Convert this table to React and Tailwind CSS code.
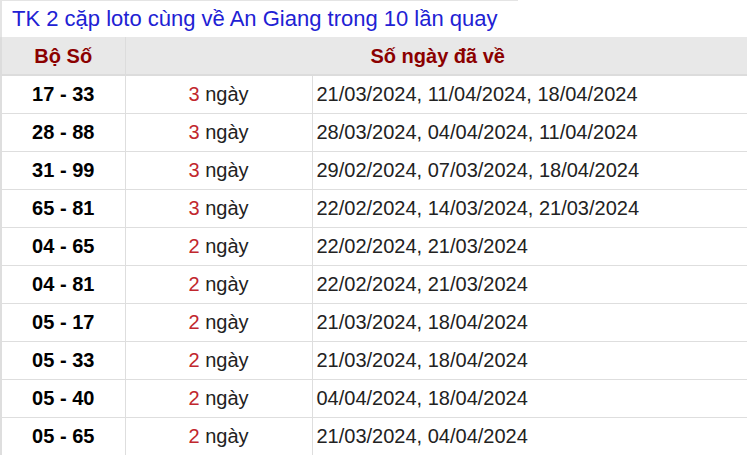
const ROWS = [
  ['17 - 33', 3, '21/03/2024, 11/04/2024, 18/04/2024'],
  ['28 - 88', 3, '28/03/2024, 04/04/2024, 11/04/2024'],
  ['31 - 99', 3, '29/02/2024, 07/03/2024, 18/04/2024'],
  ['65 - 81', 3, '22/02/2024, 14/03/2024, 21/03/2024'],
  ['04 - 65', 2, '22/02/2024, 21/03/2024'],
  ['04 - 81', 2, '22/02/2024, 21/03/2024'],
  ['05 - 17', 2, '21/03/2024, 18/04/2024'],
  ['05 - 33', 2, '21/03/2024, 18/04/2024'],
  ['05 - 40', 2, '04/04/2024, 18/04/2024'],
  ['05 - 65', 2, '21/03/2024, 04/04/2024'],
]

export default function App() {
  return (
    <div className="w-[747px] h-[455px] overflow-hidden bg-white font-['Liberation_Sans',Arial,sans-serif]">
      <div className="w-[518px] h-[37px] border-t border-l-2 border-[#e4e4e4] flex items-center pl-[10px] pb-[1px]">
        <h2 className="text-[22px] text-[#2121d4] leading-none">TK 2 cặp loto cùng về An Giang trong 10 lần quay</h2>
      </div>
      <table className="w-[750px] border-collapse table-fixed text-[20px]">
        <colgroup>
          <col className="w-[124px]" />
          <col className="w-[187px]" />
          <col />
        </colgroup>
        <thead>
          <tr className="h-[38px] bg-[#e8e8e8] border-b-2 border-[#dcdcdc]">
            <th className="border-l-2 border-r border-[#dcdcdc] text-[#8b0000] font-bold">Bộ Số</th>
            <th colSpan={2} className="text-[#8b0000] font-bold">Số ngày đã về</th>
          </tr>
        </thead>
        <tbody>
          {ROWS.map(([pair, n, dates]) => (
            <tr key={pair} className="h-[38px] border-b border-[#dedede]">
              <td className="border-l-2 border-r border-[#dedede] text-center font-bold text-black">{pair}</td>
              <td className="border-r border-[#dedede] text-center text-[#222]">
                <span className="text-[#c1272d]">{n}</span> ngày
              </td>
              <td className="pl-[4px] text-[#222]">{dates}</td>
            </tr>
          ))}
        </tbody>
      </table>
    </div>
  )
}
